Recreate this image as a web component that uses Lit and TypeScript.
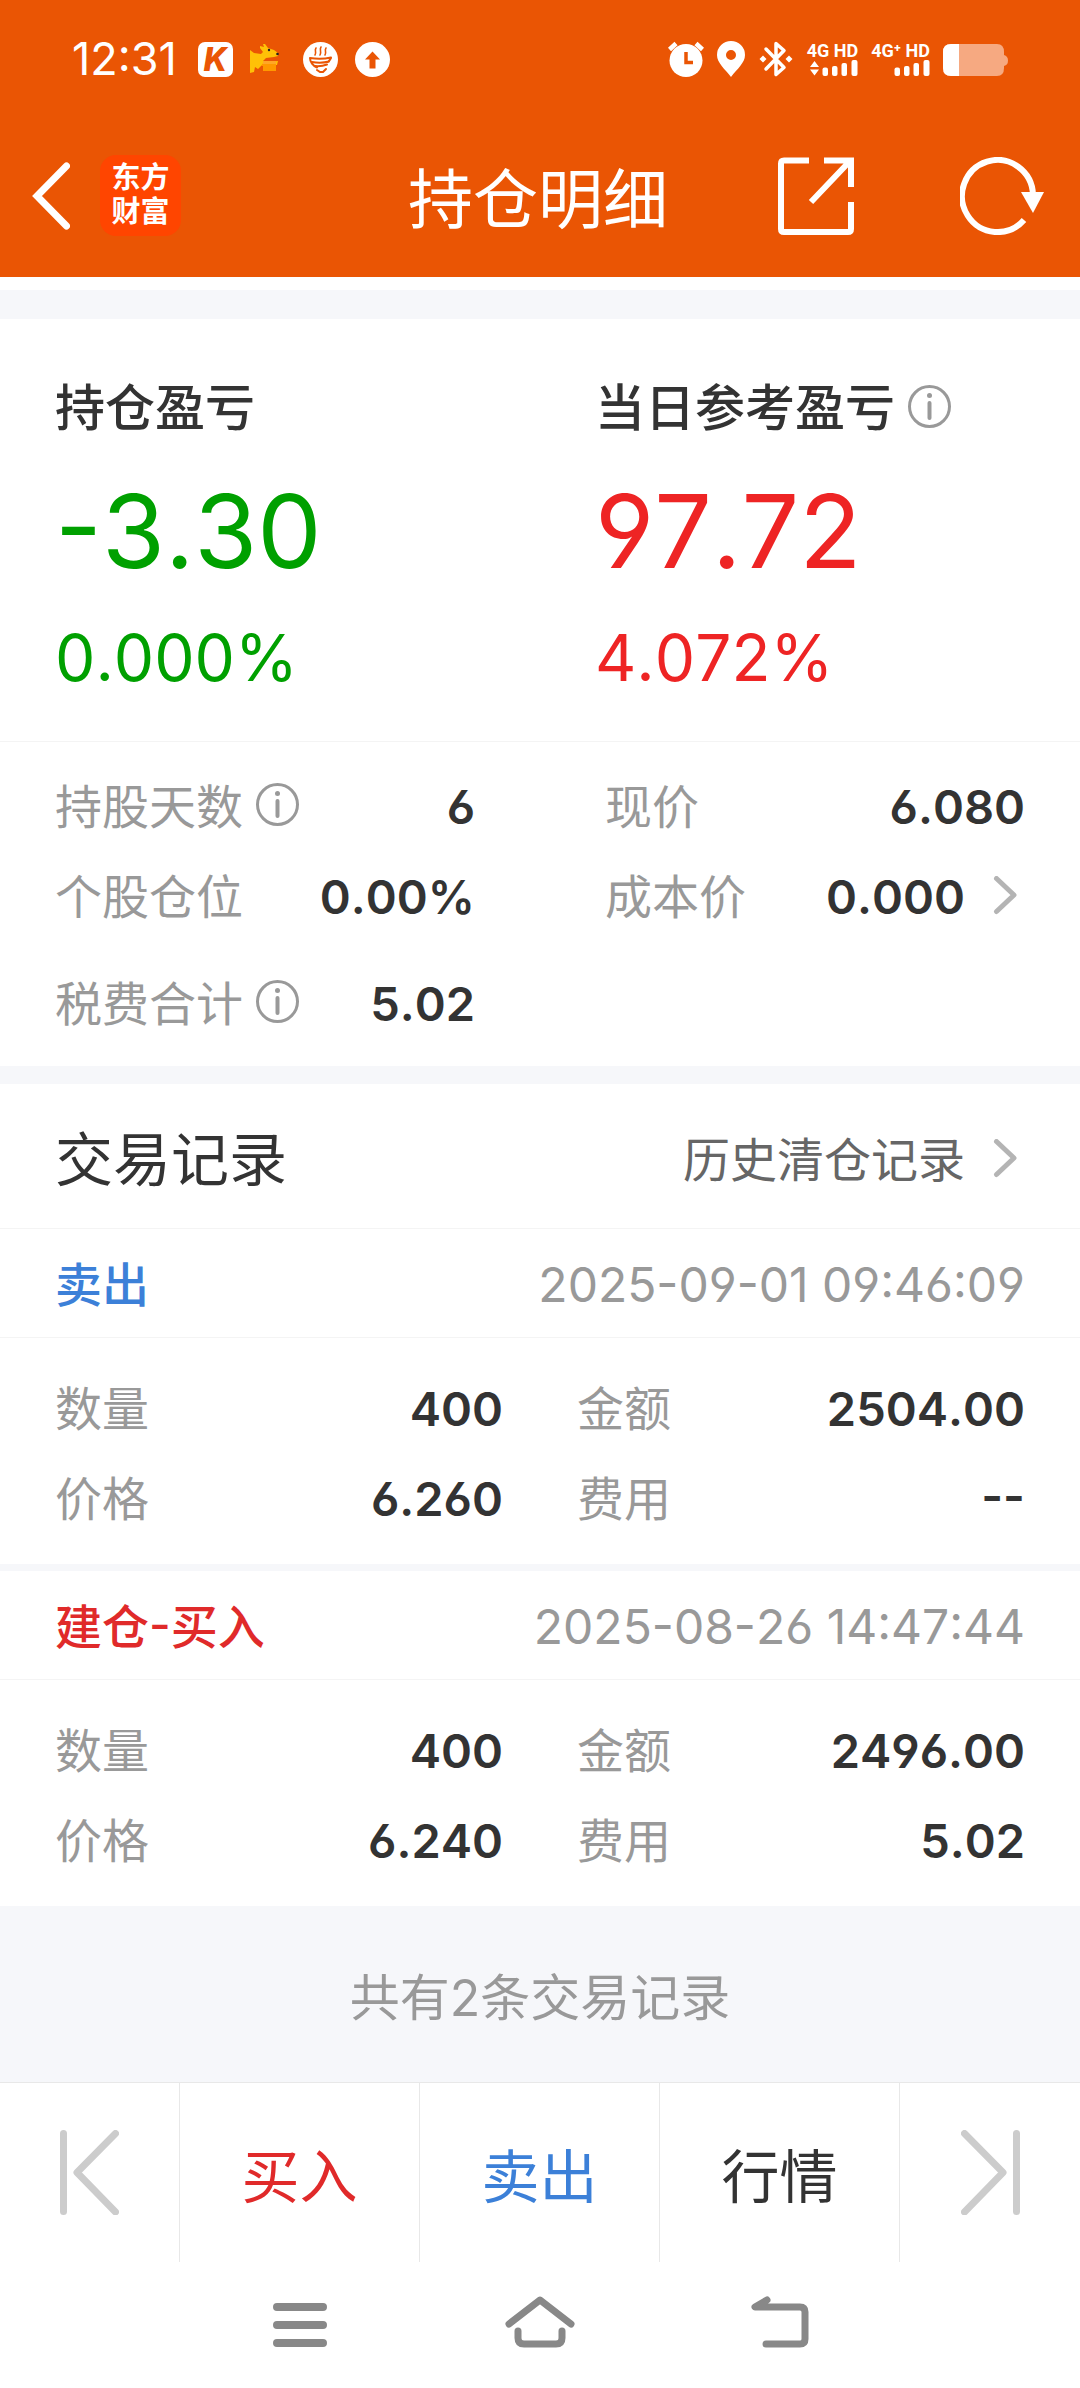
import { LitElement, html, css, svg } from "lit";
import { customElement, property } from "lit/decorators.js";
import { classMap } from "lit/directives/class-map.js";

type Field = { label: string; value: string; info?: boolean; more?: boolean };
type Trade = { kind: string; side: "buy" | "sell"; time: string; fields: Field[] };

const HOLDING: Field[] = [
  { label: "持股天数", value: "6", info: true },
  { label: "现价", value: "6.080" },
  { label: "个股仓位", value: "0.00%" },
  { label: "成本价", value: "0.000", more: true },
  { label: "税费合计", value: "5.02", info: true },
];

const TRADES: Trade[] = [
  {
    kind: "卖出",
    side: "sell",
    time: "2025-09-01 09:46:09",
    fields: [
      { label: "数量", value: "400" },
      { label: "金额", value: "2504.00" },
      { label: "价格", value: "6.260" },
      { label: "费用", value: "--" },
    ],
  },
  {
    kind: "建仓-买入",
    side: "buy",
    time: "2025-08-26 14:47:44",
    fields: [
      { label: "数量", value: "400" },
      { label: "金额", value: "2496.00" },
      { label: "价格", value: "6.240" },
      { label: "费用", value: "5.02" },
    ],
  },
];

const infoIcon = html`<svg class="info" viewBox="0 0 43 43" width="43" height="43" fill="none" stroke="#999" stroke-width="3" aria-hidden="true">
  <circle cx="21.5" cy="21.5" r="20" />
  <circle cx="21.5" cy="10.5" r="2.5" fill="#999" stroke="none" />
  <path d="M21.5 18v15" stroke-width="4" stroke-linecap="round" />
</svg>`;

const moreIcon = html`<svg class="more" viewBox="0 0 60 42" width="60" height="42" fill="none" stroke="#b4b4b4" stroke-width="5" stroke-linecap="round" stroke-linejoin="round" aria-hidden="true">
  <path d="M31.500 2.500 49 19 31.500 35.500" />
</svg>`;

const base = css`
  * {
    box-sizing: border-box;
  }
  button {
    margin: 0;
    padding: 0;
    border: 0;
    background: none;
    font: inherit;
    font-feature-settings: inherit;
    font-kerning: inherit;
    color: inherit;
    cursor: pointer;
  }
  svg {
    display: block;
    flex: none;
  }
`;

@customElement("status-bar")
export class StatusBar extends LitElement {
  static styles = [
    base,
    css`
      :host {
        display: flex;
        align-items: center;
        justify-content: space-between;
        height: 118px;
        padding: 0 72px;
        color: #fff;
      }
      .side {
        display: flex;
        align-items: center;
      }
      .left {
        gap: 17px;
      }
      .right {
        gap: 13px;
      }
      .time {
        font-size: 45px;
        line-height: 54px;
        margin-right: 4px;
      }
      .app {
        display: flex;
        align-items: center;
        justify-content: center;
        width: 35px;
        height: 35px;
        border-radius: 7px;
        background: #fff;
        color: #ea5504;
        font: italic 800 32px/35px Inter, sans-serif;
      }
      .net {
        display: flex;
        flex-direction: column;
        align-items: flex-end;
        gap: 1px;
        font: 700 18px/17px Roboto, sans-serif;
      }
    `,
  ];

  render() {
    return html`
      <div class="side left">
        <span class="time">12:31</span>
        <span class="app">K</span>
        <svg viewBox="0 0 36 36" width="36" height="36">
          <path fill="#ffc107" d="M0 9 4 12 11 13 13 11 10 7 10 5 14 6 13 3 15 3 18 7 24 9 28 12 28 15 24 16 16 17 13 20 16 21 28 20 27 24 15 24 13 23 8 28 5 26 4 31 0 32z" />
          <path fill="#ff9800" d="M14 21h12v9H13v-5h-2z" />
          <path fill="#ffa726" d="M13 20h13v3H13z" />
          <circle cx="19" cy="9" r="1.200" fill="#222" /><circle cx="27.500" cy="13" r="1.300" fill="#222" />
        </svg>
        <svg viewBox="0 0 35 35" width="35" height="35" fill="none" stroke="#ea5504" stroke-linecap="round">
          <circle cx="17.500" cy="17.500" r="17.500" fill="#fff" stroke="none" />
          <path stroke-width="1.600" d="M13 6c-2 3 1 4-1 7M18 5c-2 3 1 4-1 8M23 6c-2 3 1 4-1 7" />
          <path stroke-width="2" d="M7 16c7 1 14 1 21-.500M7 16c0 4 3 8 7 9.500M28 16c-1 2-2 3-3 4M9 20c6 1 11 1 17-.500M12 24c5 .500 8 0 12-1.500M14 28l3 2h3l3-3" />
        </svg>
        <svg viewBox="0 0 35 35" width="35" height="35">
          <circle cx="17.500" cy="17.500" r="17.500" fill="#fff" />
          <path fill="#ea5504" d="M17.500 9.500 25 17.500H20.500V26.500H14.500V17.500H10z" />
        </svg>
      </div>
      <div class="side right">
        <svg viewBox="0 0 36 36" width="36" height="36">
          <circle cx="18" cy="19.500" r="16.500" fill="#fff" />
          <path stroke="#fff" stroke-width="4.500" d="M1.500 8.500 8 2.500M34.500 8.500 28 2.500" />
          <path fill="none" stroke="#ea5504" stroke-width="3.500" d="M18 11v10.500h7" />
        </svg>
        <svg viewBox="0 0 28 36" width="28" height="36">
          <path fill="#fff" fill-rule="evenodd" d="M14 0a14 14 0 0 1 14 14c0 8-8 14-14 22C8 28 0 22 0 14A14 14 0 0 1 14 0zm0 9a5 5 0 1 0 0 10a5 5 0 0 0 0-10z" />
        </svg>
        <svg viewBox="0 0 36 36" width="36" height="36">
          <path fill="none" stroke="#fff" stroke-width="3.500" stroke-linejoin="round" stroke-linecap="round" d="M8 8 26 26.500 18 33.500V2.500L26 9.500 8 28" />
          <path fill="#fff" d="M5 14.500 8.500 18 5 21.500 1.500 18zM31 14.500 34.500 18 31 21.500 27.500 18z" />
        </svg>
        <span class="net">
          4G HD
          <svg viewBox="0 0 48 16" width="48" height="16" fill="#fff">
            <path d="M0 7 4.500 1 9 7zM0 9.500h9L4.500 15.500z" />
            <rect x="12.500" y="7.500" width="5.500" height="8.500" rx="2" /><rect x="22" y="6" width="5.500" height="10" rx="2" />
            <rect x="31.500" y="3" width="5.500" height="13" rx="2" /><rect x="41.500" y="0" width="6" height="16" rx="2" />
          </svg>
        </span>
        <span class="net">
          4G⁺ HD
          <svg viewBox="0 0 48 16" width="48" height="16" fill="#fff">
            <rect x="12.500" y="7.500" width="5.500" height="8.500" rx="2" /><rect x="22" y="6" width="5.500" height="10" rx="2" />
            <rect x="31.500" y="3" width="5.500" height="13" rx="2" /><rect x="41.500" y="0" width="6" height="16" rx="2" />
          </svg>
        </span>
        <svg viewBox="0 0 65 36" width="65" height="36">
          <path fill="#f6a981" d="M8 3h46q7 0 7 8v3q4 1 4 5.500T61 25v2q0 8-7 8H8q-8 0-8-8V11q0-8 8-8z" />
          <path fill="#fff" d="M16 3H8q-8 0-8 8v16q0 8 8 8h8z" />
        </svg>
      </div>
    `;
  }
}

@customElement("title-bar")
export class TitleBar extends LitElement {
  static styles = [
    base,
    css`
      :host {
        display: grid;
        grid-template-columns: 1fr auto 1fr;
        align-items: center;
        height: 159px;
        padding: 0 36px 4px 32px;
        color: #fff;
      }
      .start,
      .end {
        display: flex;
        align-items: center;
      }
      .start {
        gap: 30px;
      }
      .end {
        justify-content: flex-end;
        gap: 106px;
      }
      .title {
        margin: 0;
        padding-top: 8px;
        font-size: 65px;
        line-height: 80px;
        font-weight: 400;
      }
      .brand {
        width: 81px;
        height: 81px;
        padding: 6px 0;
        border-radius: 16px;
        background: #ff4500;
        text-align: center;
        font-size: 29px;
        line-height: 34px;
        font-weight: 700;
      }
      .brand span {
        display: block;
      }
    `,
  ];

  render() {
    return html`
      <div class="start">
        <button aria-label="返回">
          <svg viewBox="0 0 38 68" width="38" height="68" fill="none" stroke="#fff" stroke-width="7" stroke-linecap="round" stroke-linejoin="miter">
            <path d="M34.500 4 5 34 34.500 64" />
          </svg>
        </button>
        <div class="brand"><span>东方</span><span>财富</span></div>
      </div>
      <h1 class="title">持仓明细</h1>
      <div class="end">
        <button aria-label="分享">
          <svg viewBox="0 0 76 78" width="76" height="78" fill="none" stroke="#fff" stroke-width="6">
            <path d="M31 3.500H6q-3 0-3 3V72q0 3 3 3h64q3 0 3-3V45" />
            <path d="M46 3.500H73V30M72 4 33 45" />
          </svg>
        </button>
        <button aria-label="刷新">
          <svg viewBox="0 0 84 78" width="84" height="78" fill="none" stroke="#fff" stroke-width="6">
            <path d="M73 38A35.500 36 0 1 0 64 63" />
            <path fill="#fff" stroke="none" d="M61 35H84L73 56z" />
          </svg>
        </button>
      </div>
    `;
  }
}

@customElement("field-row")
export class FieldRow extends LitElement {
  @property({ attribute: false }) field!: Field;

  static styles = [
    base,
    css`
      :host {
        display: flex;
        align-items: center;
        justify-content: space-between;
        min-height: 90px;
        line-height: 56px;
      }
      .label,
      .value {
        display: flex;
        align-items: center;
      }
      .label {
        gap: 13px;
        color: #999;
      }
      .value {
        font-weight: 600;
        color: #333;
      }
      .info {
        margin-bottom: 6px;
      }
    `,
  ];

  render() {
    const { label, value, info, more } = this.field;
    return html`
      <span class="label">${label}${info ? html`<button aria-label="${label}说明">${infoIcon}</button>` : null}</span>
      ${more
        ? html`<button class="value">${value}${moreIcon}</button>`
        : html`<span class="value">${value}</span>`}
    `;
  }
}

@customElement("trade-record")
export class TradeRecord extends LitElement {
  @property({ attribute: false }) trade!: Trade;

  static styles = [
    base,
    css`
      :host {
        display: block;
      }
      .head {
        display: flex;
        align-items: center;
        justify-content: space-between;
        height: 109px;
        padding: 4px 55px 0;
        border-bottom: 1px solid #f4f4f4;
        color: #999;
      }
      .kind {
        font-weight: 500;
      }
      .time {
        font-size: 48px;
      }
      .sell {
        color: #3c80d8;
      }
      .buy {
        color: #e02a2a;
      }
      .fields {
        display: grid;
        grid-template-columns: 1fr 1fr;
        column-gap: 74px;
        padding: 26px 55px 20px;
      }
    `,
  ];

  render() {
    const { kind, side, time, fields } = this.trade;
    return html`
      <div class="head">
        <span class=${classMap({ kind: true, [side]: true })}>${kind}</span>
        <time class="time">${time}</time>
      </div>
      <div class="fields">${fields.map((f) => html`<field-row .field=${f}></field-row>`)}</div>
    `;
  }
}

@customElement("app-root")
export class AppRoot extends LitElement {
  static styles = [
    base,
    css`
      :host {
        display: flex;
        flex-direction: column;
        min-height: 100vh;
        background: #fff;
        color: #333;
        font-family: Inter, "Noto Sans CJK SC", sans-serif;
        font-size: 47px;
        line-height: 56px;
        font-kerning: none;
        font-feature-settings: "cv03", "cv04", "case";
      }
      .top {
        background: #ea5504;
        margin-bottom: 13px;
      }
      .band {
        height: 18px;
        background: #f6f7fa;
      }
      .band.tall {
        height: 29px;
      }
      .band.thin {
        height: 7px;
      }
      .summary {
        display: grid;
        grid-template-columns: 1fr 1fr;
        padding: 54px 0 43px;
        border-bottom: 1px solid #f4f4f4;
      }
      .profit {
        padding-left: 55px;
      }
      .name {
        display: flex;
        align-items: center;
        gap: 13px;
        margin: 0 0 28px;
        font-size: 50px;
        line-height: 70px;
        font-weight: 500;
      }
      .info {
        margin-bottom: 4px;
      }
      .amount {
        font-size: 102px;
        line-height: 120px;
        margin-bottom: 27px;
      }
      .rate {
        font-size: 64px;
        line-height: 80px;
      }
      .fall {
        color: #00a000;
      }
      .rise {
        color: #ee2424;
      }
      .holding {
        display: grid;
        grid-template-columns: 1fr 1fr;
        column-gap: 130px;
        padding: 20px 55px 17px;
      }
      .holding :last-child {
        margin-top: 17px;
      }
      .section {
        display: flex;
        align-items: center;
        justify-content: space-between;
        height: 145px;
        padding: 8px 55px 0;
        border-bottom: 1px solid #f4f4f4;
      }
      .heading {
        margin: 0;
        font-size: 58px;
        line-height: 80px;
        font-weight: 400;
      }
      .history {
        display: flex;
        align-items: center;
        color: #666;
        text-decoration: none;
      }
      .total {
        flex: 1;
        display: flex;
        align-items: center;
        justify-content: center;
        min-height: 175px;
        margin: 0;
        padding-top: 8px;
        background: #f6f7fa;
        color: #999;
        font-size: 50px;
      }
      .actions,
      .nav {
        display: grid;
        grid-template-columns: 3fr 4fr 4fr 4fr 3fr;
      }
      .actions {
        height: 180px;
        border-top: 1px solid #e8e8e8;
        font-size: 58px;
      }
      .actions button {
        display: flex;
        align-items: center;
        justify-content: center;
        border-right: 1px solid #e8e8e8;
      }
      .actions button:last-child {
        border-right: 0;
      }
      .actions .text {
        padding-top: 8px;
      }
      .buy {
        color: #e02a2a;
      }
      .sell {
        color: #3c80d8;
      }
      .nav {
        height: 126px;
      }
      .nav button {
        display: flex;
        align-items: center;
        justify-content: center;
      }
      .nav button:first-child {
        grid-column: 2;
      }
    `,
  ];

  private profit(name: string, amount: string, rate: string, trend: string, info: boolean) {
    return html`
      <div class="profit">
        <h2 class="name">${name}${info ? html`<button aria-label="${name}说明">${infoIcon}</button>` : null}</h2>
        <div class="amount ${trend}">${amount}</div>
        <div class="rate ${trend}">${rate}</div>
      </div>
    `;
  }

  private edgeIcon(forward: boolean) {
    const shape = forward
      ? svg`<path d="M3.500 3.500 42 42.500 3.500 82M55.500 3.500V81.500" />`
      : svg`<path d="M55.500 3.500 17 42.500 55.500 82M3.500 3.500V81.500" />`;
    return html`<svg viewBox="0 0 59 85" width="59" height="85" fill="none" stroke="#ccc" stroke-width="7" stroke-linecap="round" stroke-linejoin="round">${shape}</svg>`;
  }

  render() {
    return html`
      <header class="top">
        <status-bar></status-bar>
        <title-bar></title-bar>
      </header>
      <div class="band tall"></div>
      <section class="summary">
        ${this.profit("持仓盈亏", "-3.30", "0.000%", "fall", false)}
        ${this.profit("当日参考盈亏", "97.72", "4.072%", "rise", true)}
      </section>
      <section class="holding">${HOLDING.map((f) => html`<field-row .field=${f}></field-row>`)}</section>
      <div class="band"></div>
      <section>
        <div class="section">
          <h2 class="heading">交易记录</h2>
          <a class="history" href="#history">历史清仓记录${moreIcon}</a>
        </div>
        ${TRADES.map(
          (t, i) => html`${i ? html`<div class="band thin"></div>` : null}<trade-record .trade=${t}></trade-record>`
        )}
      </section>
      <p class="total">共有${TRADES.length}条交易记录</p>
      <div class="actions">
        <button aria-label="上一只">${this.edgeIcon(false)}</button>
        <button class="text buy">买入</button>
        <button class="text sell">卖出</button>
        <button class="text">行情</button>
        <button aria-label="下一只">${this.edgeIcon(true)}</button>
      </div>
      <nav class="nav">
        <button aria-label="最近任务">
          <svg viewBox="0 0 54 54" width="54" height="54" stroke="#888" stroke-width="8" stroke-linecap="round">
            <path d="M4 9H50M4 27H50M4 45H50" />
          </svg>
        </button>
        <button aria-label="主屏幕">
          <svg viewBox="0 0 70 58" width="70" height="58" fill="none" stroke="#888" stroke-width="7" stroke-linecap="round" stroke-linejoin="round">
            <path d="M4 28 35 4 66 28M13 35V42q0 6 6 6H51q6 0 6-6V35" />
          </svg>
        </button>
        <button aria-label="返回">
          <svg viewBox="0 0 58 58" width="58" height="58" fill="none" stroke="#888" stroke-width="7" stroke-linecap="round" stroke-linejoin="round">
            <path d="M16 4 4 11H49q5 0 5 5V43q0 5-5 5H15" />
          </svg>
        </button>
      </nav>
    `;
  }
}
